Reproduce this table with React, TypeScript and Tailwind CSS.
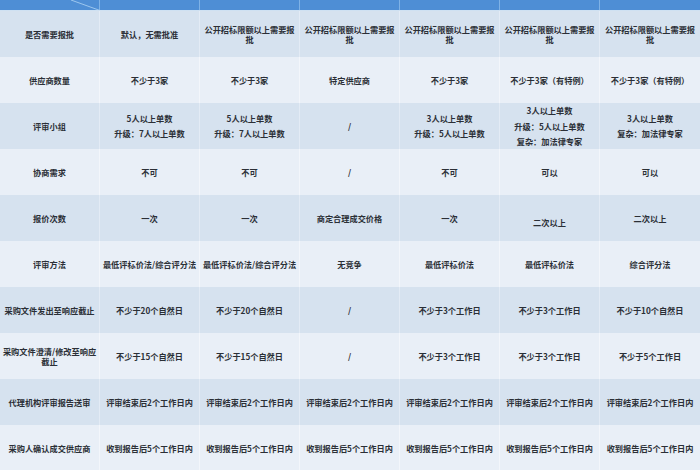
import React from "react";

type Cell = string | string[];

type Row = {
  label: string;
  cells: Cell[];
};

const rows: Row[] = [
  {
    label: "是否需要报批",
    cells: [
      "默认，无需批准",
      "公开招标限额以上需要报批",
      "公开招标限额以上需要报批",
      "公开招标限额以上需要报批",
      "公开招标限额以上需要报批",
      "公开招标限额以上需要报批",
    ],
  },
  {
    label: "供应商数量",
    cells: ["不少于3家", "不少于3家", "特定供应商", "不少于3家", "不少于3家（有特例）", "不少于3家（有特例）"],
  },
  {
    label: "评审小组",
    cells: [
      ["5人以上单数", "升级：7人以上单数"],
      ["5人以上单数", "升级：7人以上单数"],
      "/",
      ["3人以上单数", "升级：5人以上单数"],
      ["3人以上单数", "升级：5人以上单数", "复杂：加法律专家"],
      ["3人以上单数", "复杂：加法律专家"],
    ],
  },
  {
    label: "协商需求",
    cells: ["不可", "不可", "/", "不可", "可以", "可以"],
  },
  {
    label: "报价次数",
    cells: ["一次", "一次", "商定合理成交价格", "一次", "二次以上", "二次以上"],
  },
  {
    label: "评审方法",
    cells: ["最低评标价法/综合评分法", "最低评标价法/综合评分法", "无竞争", "最低评标价法", "最低评标价法", "综合评分法"],
  },
  {
    label: "采购文件发出至响应截止",
    cells: ["不少于20个自然日", "不少于20个自然日", "/", "不少于3个工作日", "不少于3个工作日", "不少于10个自然日"],
  },
  {
    label: "采购文件澄清/修改至响应截止",
    cells: ["不少于15个自然日", "不少于15个自然日", "/", "不少于3个工作日", "不少于3个工作日", "不少于5个工作日"],
  },
  {
    label: "代理机构评审报告送审",
    cells: Array(6).fill("评审结束后2个工作日内"),
  },
  {
    label: "采购人确认成交供应商",
    cells: Array(6).fill("收到报告后5个工作日内"),
  },
];

const font = { fontFamily: '"Noto Sans CJK SC", "Noto Sans", sans-serif' };

const CellText = ({ value, shift }: { value: Cell; shift?: boolean }) => {
  if (Array.isArray(value)) {
    return (
      <div className="flex flex-col items-center leading-[15.5px]">
        {value.map((line, i) => (
          <span key={i}>{line}</span>
        ))}
      </div>
    );
  }
  return <span className={`leading-[10px] ${shift ? "mt-[8px]" : ""}`}>{value}</span>;
};

export default function App() {
  return (
    <div className="w-[700px] h-[470px] overflow-hidden bg-[#e9eff7] text-[#2b2f36]" style={font}>
      {/* Header (cropped) */}
      <div className="grid grid-cols-7 h-[11px] border-b border-[#cfe1f2] bg-[#4e8ed5]">
        {Array.from({ length: 7 }).map((_, i) => (
          <div key={i} className="relative border-r border-[#7fb2e6] last:border-r-0">
            {i === 0 && (
              <svg className="absolute inset-0" width="100" height="10" viewBox="0 0 100 10">
                <line x1="71" y1="0" x2="100" y2="10.5" stroke="#9cc6ee" strokeWidth="1" />
              </svg>
            )}
          </div>
        ))}
      </div>

      {rows.map((row, r) => {
        const dark = r % 2 === 0;
        return (
          <div
            key={row.label}
            className={`grid grid-cols-7 h-[46px] text-[8.2px] font-bold ${dark ? "bg-[#d6e2ef]" : "bg-[#e9eff7]"}`}
          >
            <div
              className={`flex items-center justify-center px-[2px] text-center leading-[10px] border-r ${
                dark ? "border-[#e3ebf5]" : "border-[#f3f6fb]"
              }`}
            >
              {row.label}
            </div>
            {row.cells.map((c, i) => (
              <div
                key={i}
                className={`flex items-center justify-center px-[2px] text-center border-r last:border-r-0 ${
                  dark ? "border-[#e3ebf5]" : "border-[#f3f6fb]"
                }`}
              >
                <CellText value={c} shift={r === 4 && i === 4} />
              </div>
            ))}
          </div>
        );
      })}
    </div>
  );
}
